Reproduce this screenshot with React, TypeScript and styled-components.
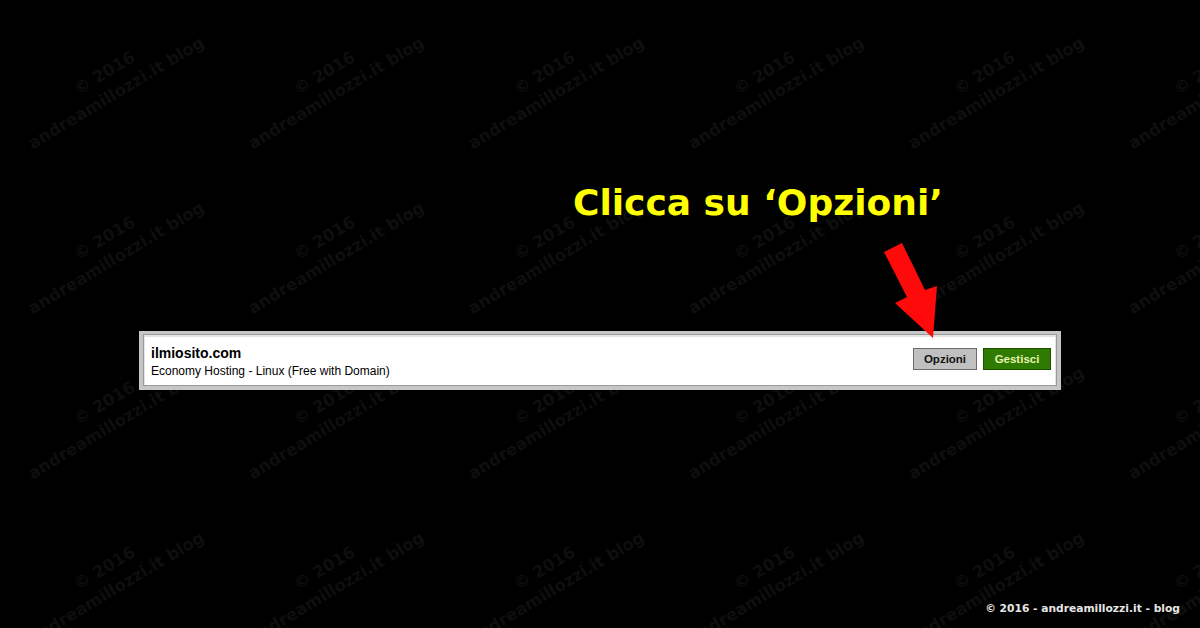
import styled, { createGlobalStyle } from "styled-components";

const GlobalStyle = createGlobalStyle`
  html, body {
    margin: 0;
    padding: 0;
    background: #000;
  }
  * {
    box-sizing: border-box;
  }
`;

const Page = styled.div`
  position: relative;
  width: 1200px;
  height: 628px;
  overflow: hidden;
  background: #000;
  display: flex;
  flex-direction: column;
`;

const Watermarks = styled.div`
  position: absolute;
  top: 0;
  left: 0;
  display: grid;
  grid-template-columns: repeat(6, 220px);
  grid-auto-rows: 165px;
  pointer-events: none;
`;

const Mark = styled.div`
  display: flex;
  align-items: center;
  justify-content: center;
  text-align: center;
  white-space: nowrap;
  font-family: "DejaVu Sans", sans-serif;
  font-weight: bold;
  font-size: 16.5px;
  line-height: 23px;
  color: #0e0e0e;
  transform: rotate(-31deg);
`;

const Content = styled.div`
  position: relative;
  display: flex;
  flex-direction: column;
  flex: 1;
`;

const Title = styled.h1`
  margin: 185px 0 0 573px;
  font-family: "DejaVu Sans", Verdana, sans-serif;
  font-weight: bold;
  font-size: 36px;
  line-height: 36px;
  color: #ffff00;
  white-space: nowrap;
`;

const Card = styled.div`
  margin: 110px 0 0 139px;
  width: 922px;
  display: flex;
  justify-content: space-between;
  align-items: flex-start;
  padding: 10px 6px 6px 8px;
  background: #fff;
  border: 4px solid #c6c6c6;
  border-top-width: 3px;
  box-shadow: inset 0 0 0 1px #9a9a9a, inset 0 1px 0 2px #e4e4e4;
`;

const Info = styled.div`
  display: flex;
  flex-direction: column;
  font-family: "Liberation Sans", Arial, sans-serif;
  color: #000;
`;

const Domain = styled.div`
  font-weight: bold;
  font-size: 14px;
  line-height: 18px;
`;

const Plan = styled.div`
  font-size: 12px;
  line-height: 18px;
`;

const Actions = styled.div`
  display: flex;
  gap: 6px;
  margin-top: 4px;
`;

const Button = styled.button<{ $primary?: boolean }>`
  height: 22px;
  padding: 0;
  width: ${(p) => (p.$primary ? "68px" : "64px")};
  font-family: "Liberation Sans", Arial, sans-serif;
  font-weight: bold;
  font-size: 11.5px;
  cursor: pointer;
  background: ${(p) => (p.$primary ? "#2f7a00" : "#c0c0c0")};
  color: ${(p) => (p.$primary ? "#e4f3b0" : "#111")};
  border: 1px solid ${(p) => (p.$primary ? "#1e4d00" : "#6c6c6c")};
`;

const Arrow = styled.svg`
  position: absolute;
  left: 880px;
  top: 240px;
`;

const Footer = styled.div`
  margin-top: auto;
  align-self: flex-end;
  padding: 0 20px 12px 0;
  font-family: "DejaVu Sans", sans-serif;
  font-weight: bold;
  font-size: 10.7px;
  line-height: 14px;
  color: #e6e6e6;
  white-space: nowrap;
`;

export default function App() {
  const marks = Array.from({ length: 24 });

  return (
    <>
      <GlobalStyle />
      <Page>
        <Watermarks>
          {marks.map((_, i) => (
            <Mark key={i}>
              © 2016
              <br />
              andreamillozzi.it blog
            </Mark>
          ))}
        </Watermarks>

        <Content>
          <Title>Clicca su ‘Opzioni’</Title>

          <Card>
            <Info>
              <Domain>ilmiosito.com</Domain>
              <Plan>Economy Hosting - Linux (Free with Domain)</Plan>
            </Info>
            <Actions>
              <Button>Opzioni</Button>
              <Button $primary>Gestisci</Button>
            </Actions>
          </Card>

          <Arrow width="60" height="102" viewBox="0 0 60 102">
            <polygon
              points="4,12 22,3 45,50 57,46 53,98 15,63 27,57"
              fill="#ff0a0a"
            />
          </Arrow>

          <Footer>© 2016 - andreamillozzi.it - blog</Footer>
        </Content>
      </Page>
    </>
  );
}
